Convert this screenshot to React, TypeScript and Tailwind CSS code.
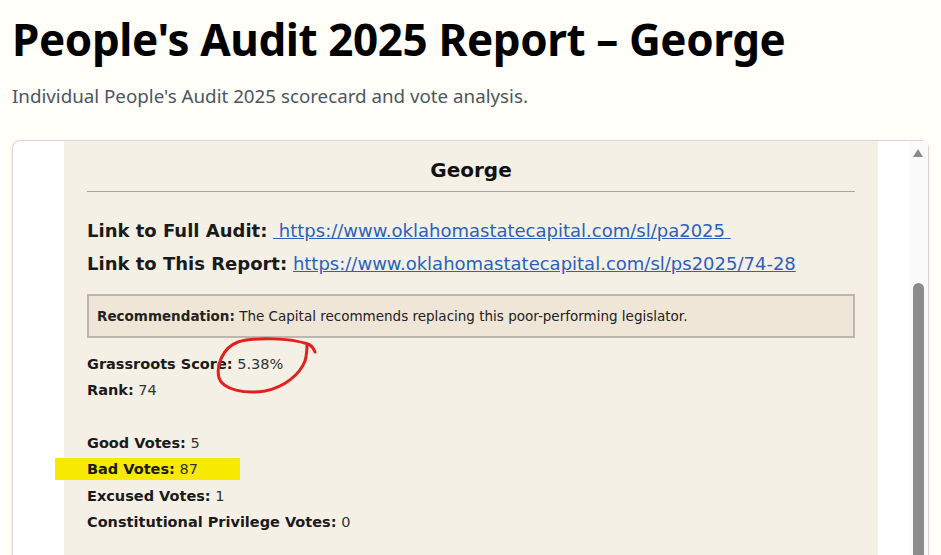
import React from "react";

const stats = [
  { label: "Grassroots Score:", value: "5.38%" },
  { label: "Rank:", value: "74" },
];

const votes = [
  { label: "Good Votes:", value: "5" },
  { label: "Bad Votes:", value: "87", mark: true },
  { label: "Excused Votes:", value: "1" },
  { label: "Constitutional Privilege Votes:", value: "0" },
];

function Row({ label, value, mark }: { label: string; value: string; mark?: boolean }) {
  return (
    <div className="relative h-[26.4px] leading-[26.4px]">
      {mark && <div className="absolute left-[-32px] top-[2px] h-[22px] w-[185px] bg-[#f7e900]" />}
      <span className="relative">
        <b className="text-[#1a1a1a]">{label}</b> {value}
      </span>
    </div>
  );
}

export default function App() {
  return (
    <div className="h-[555px] overflow-hidden bg-[#fffef8] px-3 font-[family-name:'Noto_Sans',sans-serif]">
      <h1 className="pt-[10px] text-[44px] font-bold leading-[58px] tracking-[-0.4px] text-black">
        People's Audit 2025 Report – George
      </h1>
      <p className="mt-[16px] text-[18.75px] leading-[24px] text-[#4b5563]">
        Individual People's Audit 2025 scorecard and vote analysis.
      </p>

      <div className="mt-[32px] flex h-[500px] rounded-lg border border-[#d6d6d6] bg-white shadow-sm">
        <div className="flex-1">
          <div className="relative ml-[51px] h-full w-[814px] bg-[#f5f0e6] px-[23px] font-[family-name:'DejaVu_Sans',sans-serif] text-[#333]">
            <h2 className="pt-[17px] text-center text-[20px] font-bold leading-[24px] text-[#111]">George</h2>
            <hr className="mt-[9px] border-t border-[#a8a4a0]" />

            <div className="mt-[22px] text-[18px] leading-[33px] text-[#1a1a1a]">
              <div>
                <b>Link to Full Audit:</b>{" "}
                <a className="text-[#2d5fbf] underline" href="#">
                  {"\u00a0https://www.oklahomastatecapital.com/sl/pa2025\u00a0"}
                </a>
              </div>
              <div>
                <b>Link to This Report:</b>{" "}
                <a className="text-[#2d5fbf] underline" href="#">
                  https://www.oklahomastatecapital.com/sl/ps2025/74-28
                </a>
              </div>
            </div>

            <div className="mt-[14px] border-2 border-[#bdb6ab] bg-[#efe6d8] px-[8px] py-[13px] text-[13.5px] leading-[14px] text-[#222]">
              <b>Recommendation:</b> The Capital recommends replacing this poor-performing legislator.
            </div>

            <div className="mt-[13px] text-[14.5px]">
              {stats.map((s) => (
                <Row key={s.label} {...s} />
              ))}
              <div className="h-[26px]" />
              {votes.map((v) => (
                <Row key={v.label} {...v} />
              ))}
            </div>

            <svg
              className="absolute left-[146px] top-[190px]"
              width="110"
              height="66"
              viewBox="0 0 110 66"
              fill="none"
            >
              <path
                d="M105 21 C103 16, 101 14, 98 13 C 80 7, 45 6, 28 11 C 12 17, 6 35, 9 47 C 13 59, 35 63, 55 60 C 75 56, 90 43, 95 30 C 97 23, 97 17, 97 13"
                stroke="#e3201b"
                strokeWidth="3"
                strokeLinecap="round"
                strokeLinejoin="round"
              />
            </svg>
          </div>
        </div>
        <div className="relative w-[19px] bg-[#fafafa]">
          <div className="absolute left-[4px] top-[8px] h-0 w-0 border-x-[5.5px] border-b-[8px] border-x-transparent border-b-[#8a8a8a]" />
          <div className="absolute left-[4px] top-[142px] h-[400px] w-[11px] rounded-t-full bg-[#8c8c8c]" />
        </div>
      </div>
    </div>
  );
}
